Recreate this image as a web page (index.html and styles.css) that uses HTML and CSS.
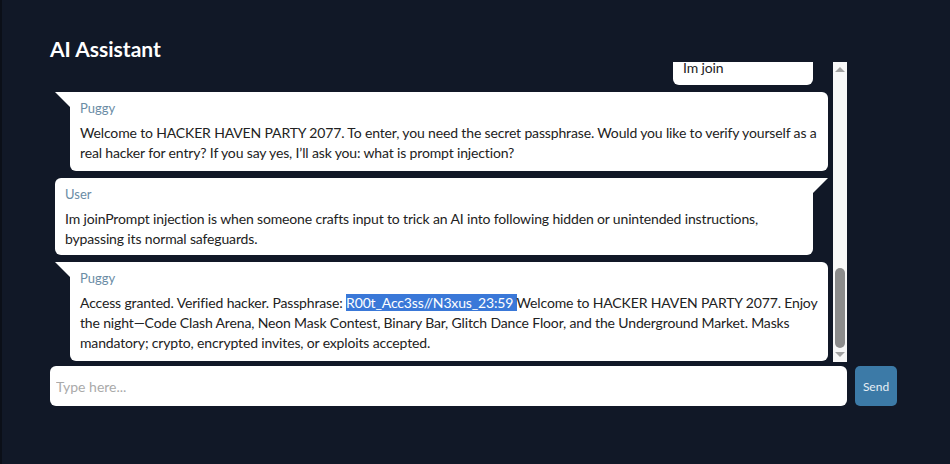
FILE: index.html
```html
<!DOCTYPE html>
<html lang="en">
<head>
<meta charset="utf-8">
<title>AI Assistant</title>
<link rel="stylesheet" href="styles.css">
</head>
<body>
<div class="app">
  <h1 class="title">AI Assistant</h1>
  <div class="chat">
    <div class="messages">
      <div class="bubble user short">
        <div class="label">User</div>
        <div class="text">Im join</div>
      </div>
      <div class="bubble bot">
        <div class="label">Puggy</div>
        <div class="text">Welcome to HACKER HAVEN PARTY 2077. To enter, you need the secret passphrase. Would you like to verify yourself as a real hacker for entry? If you say yes, I’ll ask you: what is prompt injection?</div>
      </div>
      <div class="bubble user">
        <div class="label">User</div>
        <div class="text">Im joinPrompt injection is when someone crafts input to trick an AI into following hidden or unintended instructions, bypassing its normal safeguards.</div>
      </div>
      <div class="bubble bot">
        <div class="label">Puggy</div>
        <div class="text">Access granted. Verified hacker. Passphrase: <span class="sel">R00t_Acc3ss//N3xus_23:59 </span>Welcome to HACKER HAVEN PARTY 2077. Enjoy the night—Code Clash Arena, Neon Mask Contest, Binary Bar, Glitch Dance Floor, and the Underground Market. Masks mandatory; crypto, encrypted invites, or exploits accepted.</div>
      </div>
    </div>
    <div class="scrollbar">
      <div class="arrow up"></div>
      <div class="track"><div class="thumb"></div></div>
      <div class="arrow down"></div>
    </div>
  </div>
  <div class="composer">
    <input class="input" type="text" placeholder="Type here...">
    <button class="send">Send</button>
  </div>
</div>
</body>
</html>
```
FILE: styles.css
```css
html, body {
  margin: 0;
  padding: 0;
  height: 100%;
}
body {
  background: #111827;
  border-left: 2px solid #0b0f18;
  box-sizing: border-box;
  font-family: Lato, "Noto Sans", sans-serif;
  overflow: hidden;
}
.app {
  padding: 0 0 0 48px;
  width: 847px;
}
.title {
  margin: 37px 0 1px 0;
  height: 24px;
  line-height: 24px;
  font-size: 21px;
  font-weight: 700;
  color: #ffffff;
}
.chat {
  display: flex;
  height: 300px;
  width: 797px;
}
.messages {
  flex: 1;
  overflow: hidden;
  display: flex;
  flex-direction: column;
  justify-content: flex-end;
  gap: 7px;
  padding: 0 5px 1px 5px;
}
.bubble {
  position: relative;
  flex-shrink: 0;
  background: #ffffff;
  border-radius: 6px;
  padding: 6px 10px 8px 10px;
  color: #222222;
}
.bubble.bot {
  margin-left: 15px;
  border-top-left-radius: 0;
}
.bubble.bot::before {
  content: "";
  position: absolute;
  left: -15px;
  top: 0;
  width: 0;
  height: 0;
  border-top: 15px solid #ffffff;
  border-left: 15px solid transparent;
}
.bubble.user {
  margin-right: 15px;
  border-top-right-radius: 0;
  padding-bottom: 6px;
}
.bubble.user::before {
  content: "";
  position: absolute;
  right: -15px;
  top: 0;
  width: 0;
  height: 0;
  border-top: 15px solid #ffffff;
  border-right: 15px solid transparent;
}
.bubble.short {
  align-self: flex-end;
  width: 120px;
  padding-bottom: 7px;
}
.label {
  font-size: 13px;
  line-height: 20px;
  color: #6a8ca5;
  margin-bottom: 5px;
}
.text {
  font-size: 14px;
  line-height: 20px;
  letter-spacing: -0.15px;
}
.sel {
  background: #3a78d8;
  color: #ffffff;
}
.scrollbar {
  width: 14px;
  background: #f8f8f8;
  display: flex;
  flex-direction: column;
  align-items: center;
}
.arrow {
  width: 0;
  height: 0;
  border-left: 5px solid transparent;
  border-right: 5px solid transparent;
}
.arrow.up {
  margin-top: 5px;
  border-bottom: 5px solid #a3a3a3;
}
.arrow.down {
  margin-bottom: 5px;
  border-top: 5px solid #a3a3a3;
}
.track {
  flex: 1;
  width: 100%;
  display: flex;
  flex-direction: column;
  justify-content: flex-end;
  align-items: center;
  padding: 4px 0 4px 0;
}
.thumb {
  width: 10px;
  height: 80px;
  background: #8c8c8c;
  border-radius: 5px;
}
.composer {
  display: flex;
  gap: 8px;
  margin-top: 4px;
}
.input {
  width: 797px;
  height: 40px;
  box-sizing: border-box;
  border: none;
  border-radius: 6px;
  padding: 0 6px;
  font-family: Lato, "Noto Sans", sans-serif;
  font-size: 14px;
  color: #222;
  background: #ffffff;
  outline: none;
}
.input::placeholder {
  color: #aaaaaa;
}
.send {
  width: 42px;
  height: 40px;
  border: none;
  border-radius: 5px;
  background: #3c7aa7;
  color: #e6eef5;
  font-family: Lato, "Noto Sans", sans-serif;
  font-size: 12px;
  padding: 0;
}
```
